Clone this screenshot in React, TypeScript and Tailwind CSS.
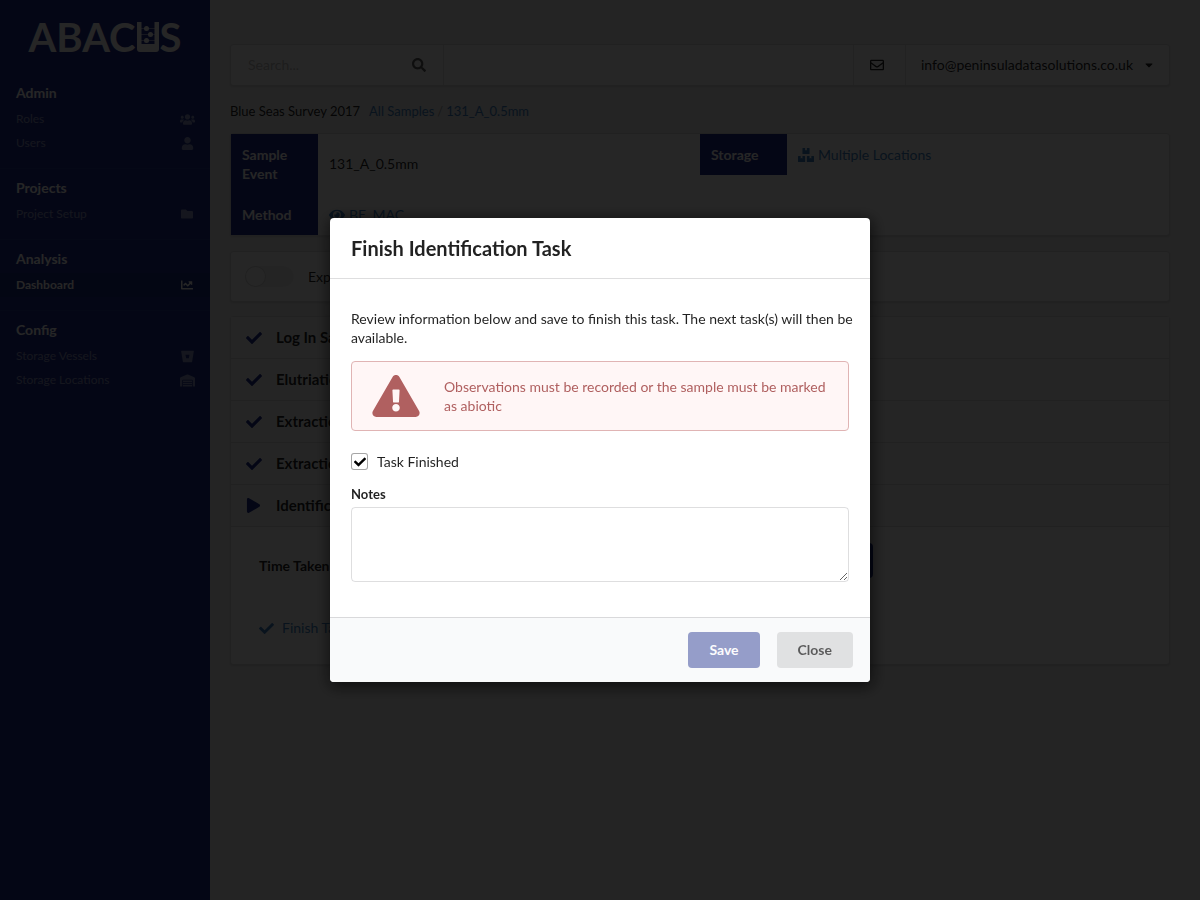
import type { ReactNode } from "react"
import {
  FaBitbucket,
  FaBoxes,
  FaCaretDown,
  FaChartLine,
  FaCheck,
  FaExclamationTriangle,
  FaEye,
  FaFolder,
  FaPlay,
  FaRegEnvelope,
  FaSearch,
  FaUser,
  FaUsers,
  FaWarehouse,
} from "react-icons/fa"

const MENU = [
  {
    title: "Admin",
    items: [
      { label: "Roles", icon: <FaUsers size={15} className="shrink-0" /> },
      { label: "Users", icon: <FaUser size={13} /> },
    ],
  },
  {
    title: "Projects",
    items: [{ label: "Project Setup", icon: <FaFolder size={12} /> }],
  },
  {
    title: "Analysis",
    items: [{ label: "Dashboard", icon: <FaChartLine size={12} />, active: true }],
  },
  {
    title: "Config",
    items: [
      { label: "Storage Vessels", icon: <Bucket /> },
      { label: "Storage Locations", icon: <FaWarehouse size={15} className="shrink-0" /> },
    ],
  },
]

const TASKS = [
  { name: "Log In Sample", done: true },
  { name: "Elutriation", done: true },
  { name: "Extraction", done: true },
  { name: "Extraction", done: true },
  { name: "Identification", done: false },
]

function Bucket() {
  return <FaBitbucket size={13} />
}

function Logo() {
  return (
    <div className="flex h-[74px] items-center justify-center gap-px text-[40px] font-bold leading-none text-white">
      <span>ABAC</span>
      <svg width="22" height="30" viewBox="0 0 22 30" fill="currentColor">
        <path d="M0 0H4.500V22H17.500V0H22V27Q22 30 19 30H3Q0 30 0 27Z" />
        <path d="M4 6.500H18M4 12.500H18M4 18.500H18" stroke="currentColor" strokeWidth="0.5" />
        <circle cx="9.500" cy="6.500" r="2.500" />
        <circle cx="13.500" cy="12.500" r="2.500" />
        <circle cx="9.500" cy="18.500" r="2.500" />
      </svg>
      <span>S</span>
    </div>
  )
}

function Sidebar() {
  return (
    <nav className="w-[210px] shrink-0 bg-[#1b2d8c] text-white">
      <Logo />
      {MENU.map((group) => (
        <div key={group.title} className="border-b border-white/5 pt-[10px] pb-[13px] last:border-0">
          <h2 className="mb-[5px] px-4 text-sm leading-[18px] font-bold">{group.title}</h2>
          {group.items.map((item) => (
            <a
              key={item.label}
              href="#"
              className={
                item.active
                  ? "flex h-6 items-center justify-between bg-black/10 px-4 text-xs font-bold"
                  : "flex h-6 items-center justify-between px-4 text-xs text-white/50"
              }
            >
              {item.label}
              <span className="flex w-[14px] justify-center">{item.icon}</span>
            </a>
          ))}
        </div>
      ))}
    </nav>
  )
}

function Card({ className = "", children }: { className?: string; children: ReactNode }) {
  return (
    <div className={"rounded border border-[#22242626] bg-white shadow-sm " + className}>{children}</div>
  )
}

function TopBar() {
  return (
    <Card className="flex h-[42px] items-stretch">
      <label className="flex w-[213px] items-center justify-between border-r border-black/10 pr-[17px] pl-[17px]">
        <input
          type="text"
          aria-label="Search"
          placeholder="Search..."
          className="w-36 bg-transparent outline-none placeholder:text-[#bfbfbf]"
        />
        <FaSearch size={14} className="opacity-70" />
      </label>
      <button
        aria-label="Messages"
        className="ml-auto flex w-[53px] items-center justify-center border-x border-black/10 pr-[5px]"
      >
        <FaRegEnvelope size={14} />
      </button>
      <button className="flex items-center gap-[10px] pr-[14px] pl-[15px]">
        info@peninsuladatasolutions.co.uk
        <FaCaretDown size={12} />
      </button>
    </Card>
  )
}

function SampleDetails() {
  return (
    <Card className="mt-3 grid grid-cols-2 items-start">
      <table className="text-left">
        <tbody>
          <tr>
            <th className="w-[87px] bg-[#1b2d8c] p-[11px] leading-[19px] text-white">Sample Event</th>
            <td className="p-[11px]">131_A_0.5mm</td>
          </tr>
          <tr>
            <th className="bg-[#1b2d8c] p-[11px] leading-[19px] text-white">Method</th>
            <td className="px-[11px]">
              <a href="#" className="flex items-center gap-1 text-[#4183c4]">
                <FaEye size={16} />
                BE_MAC
              </a>
            </td>
          </tr>
        </tbody>
      </table>
      <table className="text-left">
        <tbody>
          <tr>
            <th className="w-[87px] bg-[#1b2d8c] p-[11px] leading-[19px] text-white">Storage</th>
            <td className="px-[11px]">
              <a href="#" className="flex items-center gap-1 text-[#4183c4]">
                <FaBoxes size={16} />
                Multiple Locations
              </a>
            </td>
          </tr>
        </tbody>
      </table>
    </Card>
  )
}

function TaskList() {
  return (
    <Card className="mt-[14px]">
      {TASKS.map((task, i) => (
        <div
          key={i}
          className="flex h-[42px] items-center gap-[14px] border-b border-black/10 bg-[#f7f7f7] px-[15px] text-[15px] font-bold"
        >
          <span className="w-4 text-[#1b2d8c]">
            {task.done ? <FaCheck size={16} /> : <FaPlay size={15} />}
          </span>
          {task.name}
        </div>
      ))}
      <div className="px-7 pt-4 pb-[26px]">
        <div className="flex items-center">
          <label htmlFor="time" className="w-[100px] pt-[10px] font-bold">
            Time Taken
          </label>
          <input id="time" className="h-[35px] w-[440px] rounded border border-black/15 px-3" />
          <button className="ml-2 h-[35px] w-[66px] rounded bg-[#1b2d8c] font-bold text-white">Save</button>
        </div>
        <a href="#" className="mt-10 flex items-center gap-2 text-[#4183c4]">
          <FaCheck size={15} />
          Finish Task
        </a>
      </div>
    </Card>
  )
}

function FinishTaskModal() {
  return (
    <div className="fixed inset-0 flex items-center justify-center bg-black/85">
      <div
        role="dialog"
        aria-labelledby="modal-title"
        className="w-[540px] max-w-full overflow-hidden rounded bg-white shadow-[1px_3px_15px_2px_rgba(0,0,0,0.6)]"
      >
        <h1
          id="modal-title"
          className="border-b border-[#22242626] px-[21px] py-[15px] text-xl leading-[30px] font-bold"
        >
          Finish Identification Task
        </h1>
        <form className="px-[21px] pt-[30px] pb-[35px]">
          <p className="-mr-3 leading-[19px]">
            Review information below and save to finish this task. The next task(s) will then be available.
          </p>
          <div className="mt-[14px] flex items-center gap-6 rounded border border-[#e0b4b4] bg-[#fff6f6] px-5 py-[13px] text-[#b06060]">
            <FaExclamationTriangle size={42} className="w-12 shrink-0" />
            <p className="leading-[19px]">Observations must be recorded or the sample must be marked as abiotic</p>
          </div>
          <label className="mt-[22px] flex items-center gap-[9px] leading-[17px]">
            <span className="relative flex h-[17px] w-[17px]">
              <input
                type="checkbox"
                defaultChecked
                className="peer h-[17px] w-[17px] appearance-none rounded-[3px] border border-black/35 bg-white"
              />
              <FaCheck
                size={12}
                className="pointer-events-none absolute inset-0 m-auto hidden text-black peer-checked:block"
              />
            </span>
            Task Finished
          </label>
          <label htmlFor="notes" className="mt-4 mb-1 block text-[13px] leading-[17px] font-bold">
            Notes
          </label>
          <textarea
            id="notes"
            className="block h-[75px] w-full resize-y rounded border border-[#22242626] px-3 py-2 outline-none"
          />
        </form>
        <div className="flex justify-end gap-[17px] border-t border-[#22242626] bg-[#f9fafb] px-[17px] py-[14px] font-bold">
          <button disabled className="h-9 rounded bg-[#1b2d8c] px-[21px] text-white opacity-45">
            Save
          </button>
          <button className="h-9 rounded bg-[#e0e1e2] px-[21px] text-black/60">Close</button>
        </div>
      </div>
    </div>
  )
}

export default function App() {
  return (
    <div className="flex min-h-screen bg-[#f0f0f0] font-[Lato,sans-serif] text-sm text-black/87">
      <Sidebar />
      <main className="min-w-0 flex-1 pt-11 pr-[30px] pl-5">
        <TopBar />
        <div className="mt-4 flex gap-[3px] text-[13px] leading-[19px]">
          <span className="mr-[6px]">Blue Seas Survey 2017</span>
          <a href="#" className="text-[#4183c4]">
            All Samples
          </a>
          <span className="opacity-40">/</span>
          <a href="#" className="text-[#4183c4]">
            131_A_0.5mm
          </a>
        </div>
        <SampleDetails />
        <Card className="mt-[15px] flex h-[51px] items-center px-[14px]">
          <label className="flex items-center gap-[14px]">
            <span className="relative flex">
              <input
                type="checkbox"
                className="peer h-[21px] w-[49px] appearance-none rounded-full bg-black/5"
              />
              <span className="pointer-events-none absolute top-0 left-0 h-[21px] w-[21px] rounded-full border border-black/15 bg-white peer-checked:left-7" />
            </span>
            Expand All
          </label>
        </Card>
        <TaskList />
      </main>
      <FinishTaskModal />
    </div>
  )
}
